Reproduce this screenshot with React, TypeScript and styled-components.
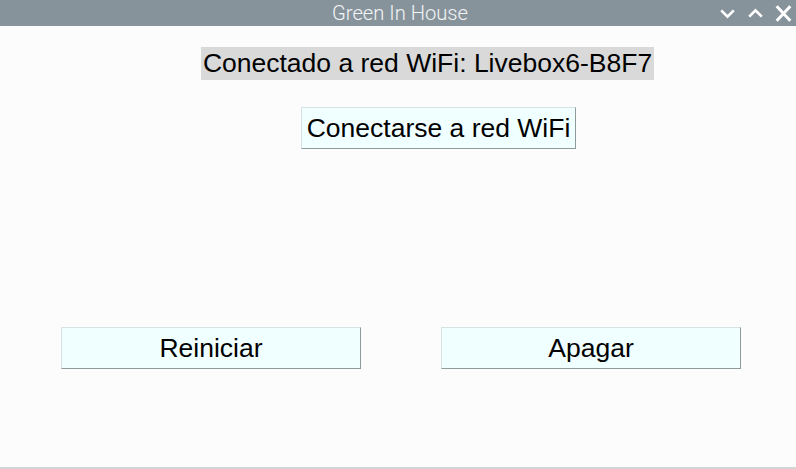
import React from "react";
import styled, { createGlobalStyle } from "styled-components";

const Global = createGlobalStyle`
  html, body { margin: 0; padding: 0; background: #fcfcfc; }
  #root { width: 796px; height: 469px; }
`;

const Window = styled.div`
  width: 796px;
  height: 469px;
  display: flex;
  flex-direction: column;
  box-sizing: border-box;
  background: #fcfcfc;
  border-bottom: 2px solid #d4d4d4;
`;

const TitleBar = styled.div`
  height: 26px;
  flex: 0 0 26px;
  background: #87939b;
  position: relative;
  display: flex;
  align-items: center;
  justify-content: center;
`;

const Title = styled.div`
  font-family: Roboto, "Noto Sans", sans-serif;
  font-weight: 300;
  font-size: 20.2px;
  color: #f2f4f5;
  line-height: 26px;
  margin-left: 4px;
`;

const Controls = styled.div`
  position: absolute;
  right: 1px;
  top: 0;
  height: 26px;
  display: flex;
  align-items: center;
  gap: 5px;
`;

const CtrlIcon = styled.svg`
  width: 23px;
  height: 23px;
  display: block;
`;

const Content = styled.div`
  flex: 1;
  display: flex;
  flex-direction: column;
  align-items: center;
  padding-top: 21px;
  font-family: "Liberation Sans", Arial, sans-serif;
  color: #000;
`;

const StatusLabel = styled.div`
  background: #d9d9d9;
  height: 33px;
  line-height: 33px;
  padding: 0 2px;
  font-size: 26.5px;
  margin-left: 59px;
  white-space: nowrap;
`;

const TkButton = styled.button<{ $width: number }>`
  box-sizing: border-box;
  height: 42px;
  width: ${(p) => `${p.$width}px`};
  background: #f0ffff;
  border: 1px solid;
  border-color: #d6e2e4 #8f9a9c #8f9a9c #d6e2e4;
  font-family: "Liberation Sans", Arial, sans-serif;
  font-size: 26.5px;
  color: #000;
  padding: 0;
  margin: 0;
  line-height: 40px;
  text-align: center;
  white-space: nowrap;
`;

const WifiButton = styled(TkButton)`
  margin-top: 27px;
  margin-left: 81px;
`;

const BottomRow = styled.div`
  margin-top: 178px;
  align-self: stretch;
  display: flex;
  padding-left: 61px;
  gap: 80px;
`;

export default function App() {
  return (
    <>
      <Global />
      <Window>
        <TitleBar>
          <Title>Green In House</Title>
          <Controls>
            <CtrlIcon viewBox="0 0 22 22">
              <path d="M5 8 L11 14 L17 8" fill="none" stroke="#fff" strokeWidth="2.6" />
            </CtrlIcon>
            <CtrlIcon viewBox="0 0 22 22">
              <path d="M5 14 L11 8 L17 14" fill="none" stroke="#fff" strokeWidth="2.6" />
            </CtrlIcon>
            <CtrlIcon viewBox="0 0 22 22">
              <path d="M4.5 4 L17.5 18 M17.5 4 L4.5 18" fill="none" stroke="#fff" strokeWidth="2.8" />
            </CtrlIcon>
          </Controls>
        </TitleBar>
        <Content>
          <StatusLabel>Conectado a red WiFi: Livebox6-B8F7</StatusLabel>
          <WifiButton $width={275}>Conectarse a red WiFi</WifiButton>
          <BottomRow>
            <TkButton $width={300}>Reiniciar</TkButton>
            <TkButton $width={300}>Apagar</TkButton>
          </BottomRow>
        </Content>
      </Window>
    </>
  );
}
